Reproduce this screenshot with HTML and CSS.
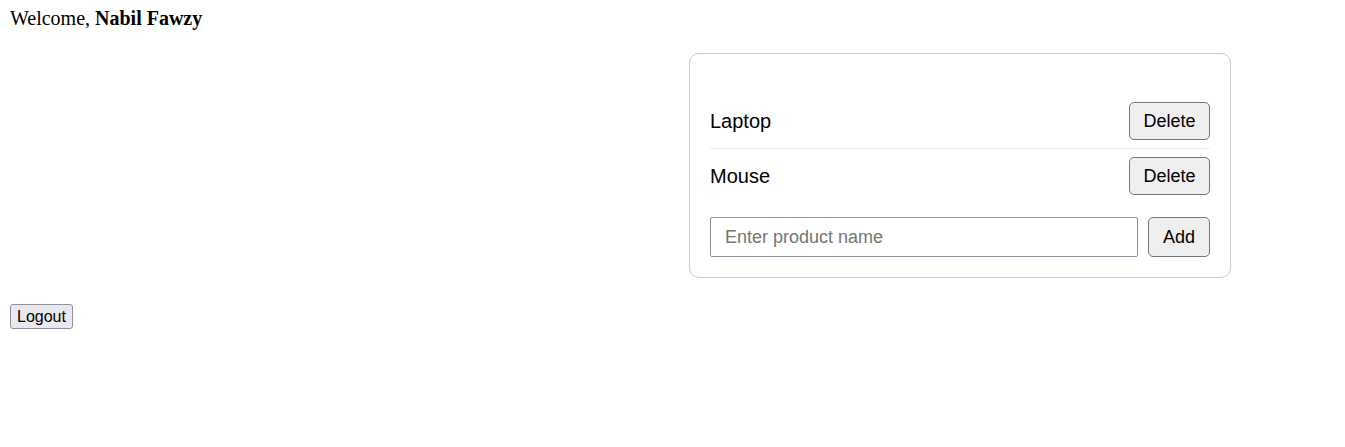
FILE: index.html
```html
<!DOCTYPE html>
<html>
<head>
<meta charset="utf-8">
<link rel="stylesheet" href="styles.css">
</head>
<body>
<div class="welcome">Welcome, <b>Nabil Fawzy</b></div>
<div class="card-wrap">
  <div class="card">
    <ul class="list">
      <li class="row"><span class="name">Laptop</span><button class="btn">Delete</button></li>
      <li class="row"><span class="name">Mouse</span><button class="btn">Delete</button></li>
    </ul>
    <div class="add">
      <input class="input" type="text" placeholder="Enter product name">
      <button class="btn btn-add">Add</button>
    </div>
  </div>
</div>
<button class="logout">Logout</button>
</body>
</html>
```
FILE: styles.css
```css
body {
  margin: 7px 10px 10px;
  font-family: "Liberation Serif", "Times New Roman", serif;
  color: #000;
  background: #fff;
}
.welcome {
  font-size: 20px;
  line-height: 23px;
}
.card-wrap {
  display: flex;
  padding-left: 679px;
  margin: 23px 0 26px;
}
.card {
  width: 500px;
  border: 1px solid #ccc;
  border-radius: 10px;
  padding: 20px;
  font-family: "Liberation Sans", Arial, sans-serif;
}
.list {
  list-style: none;
  margin: 20px 0 0;
  padding: 0;
}
.row {
  display: flex;
  align-items: center;
  justify-content: space-between;
  padding: 8px 0;
  border-bottom: 1px solid #eee;
}
.row:last-child {
  border-bottom: none;
}
.name {
  font-size: 20px;
}
.btn {
  font-family: "Liberation Sans", Arial, sans-serif;
  font-size: 18px;
  height: 38px;
  padding: 0 13.5px;
  background: #efefef;
  border: 1px solid #767676;
  border-radius: 5px;
  color: #000;
}
.add {
  display: flex;
  gap: 10px;
  margin-top: 14px;
}
.input {
  flex: 1;
  height: 40px;
  box-sizing: border-box;
  border: 1px solid #8f8f9d;
  border-radius: 2px;
  padding: 0 14px;
  font-family: "Liberation Sans", Arial, sans-serif;
  font-size: 18px;
}
.input::placeholder {
  color: #757575;
}
.btn-add {
  height: 40px;
  padding: 0 14px;
}
.logout {
  font-family: "Liberation Sans", Arial, sans-serif;
  font-size: 16px;
  height: 25px;
  padding: 0 6px;
  background: #e9e9ed;
  border: 1px solid #8f8f9d;
  border-radius: 3px;
  color: #000;
}
```
